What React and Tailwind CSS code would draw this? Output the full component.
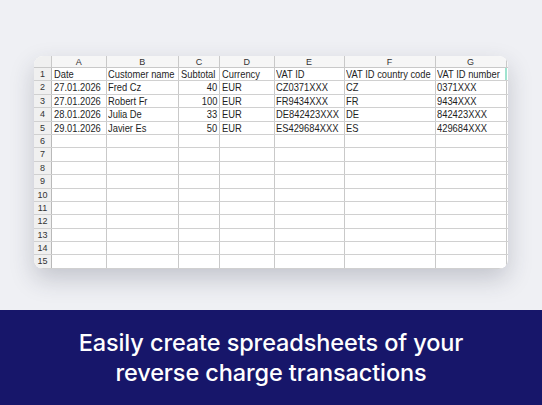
const cols = [
  { key: 'A', w: 'w-[54.5px]' },
  { key: 'B', w: 'w-[72.5px]' },
  { key: 'C', w: 'w-[41px]' },
  { key: 'D', w: 'w-[54.5px]' },
  { key: 'E', w: 'w-[70px]' },
  { key: 'F', w: 'w-[91px]' },
  { key: 'G', w: 'w-[71px]' },
];

const rows = [
  ['Date', 'Customer name', 'Subtotal', 'Currency', 'VAT ID', 'VAT ID country code', 'VAT ID number'],
  ['27.01.2026', 'Fred Cz', '40', 'EUR', 'CZ0371XXX', 'CZ', '0371XXX'],
  ['27.01.2026', 'Robert Fr', '100', 'EUR', 'FR9434XXX', 'FR', '9434XXX'],
  ['28.01.2026', 'Julia De', '33', 'EUR', 'DE842423XXX', 'DE', '842423XXX'],
  ['29.01.2026', 'Javier Es', '50', 'EUR', 'ES429684XXX', 'ES', '429684XXX'],
];

const Sheet = () => {
  const allRows = Array.from({ length: 15 }, (_, i) => rows[i] || []);

  return (
    <div className="w-[474px] rounded-[9px] overflow-hidden bg-white shadow-[0_10px_24px_rgba(40,45,70,0.22)] font-['Liberation_Sans',Arial,sans-serif] text-[#1e1e1e]">
      <div className="flex h-[12px] bg-[#f6f6f6] border-b border-[#c9c9c9]">
        <div className="w-[18px] border-r border-[#c9c9c9] bg-[#f0f0f0]" />
        {cols.map((c) => (
          <div
            key={c.key}
            className={`${c.w} border-r border-[#c9c9c9] text-[9px] leading-[12px] text-center text-[#333]`}
          >
            {c.key}
          </div>
        ))}
      </div>
      {allRows.map((r, i) => (
        <div key={i} className="flex h-[13.4px] border-b border-[#d0d0d0]">
          <div className="w-[18px] bg-[#f0f0f0] border-r border-[#b9b9b9] text-[9px] leading-[13px] text-center text-[#333]">
            {i + 1}
          </div>
          {cols.map((c, j) => {
            const right = j === 2 && i > 0;
            return (
              <div
                key={c.key}
                className={`${c.w} flex ${right ? 'justify-end' : 'justify-start'} border-r border-[#c9c9c9] px-[1.5px] ${
                  j === 6 && i === 0 ? 'border-r-2 border-r-[#9fe3cf]' : ''
                }`}
              >
                {r[j] && (
                  <span
                    className={`inline-block whitespace-nowrap text-[11px] leading-[13px] scale-x-[0.85] ${
                      right ? 'origin-right' : 'origin-left'
                    }`}
                  >
                    {r[j]}
                  </span>
                )}
              </div>
            );
          })}
        </div>
      ))}
    </div>
  );
};

const App = () => {
  return (
    <div className="w-[542px] h-[405px] flex flex-col overflow-hidden bg-[#eff0f4]">
      <div className="h-[310px] pt-[56px] pl-[34px]">
        <Sheet />
      </div>
      <div className="h-[95px] bg-[#17166a] flex items-center justify-center pt-[1px]">
        <p className="text-white text-center text-[23.5px] leading-[30px] font-medium font-['Inter',sans-serif] tracking-[-0.1px]">
          Easily create spreadsheets of your
          <br />
          reverse charge transactions
        </p>
      </div>
    </div>
  );
};

export default App;
